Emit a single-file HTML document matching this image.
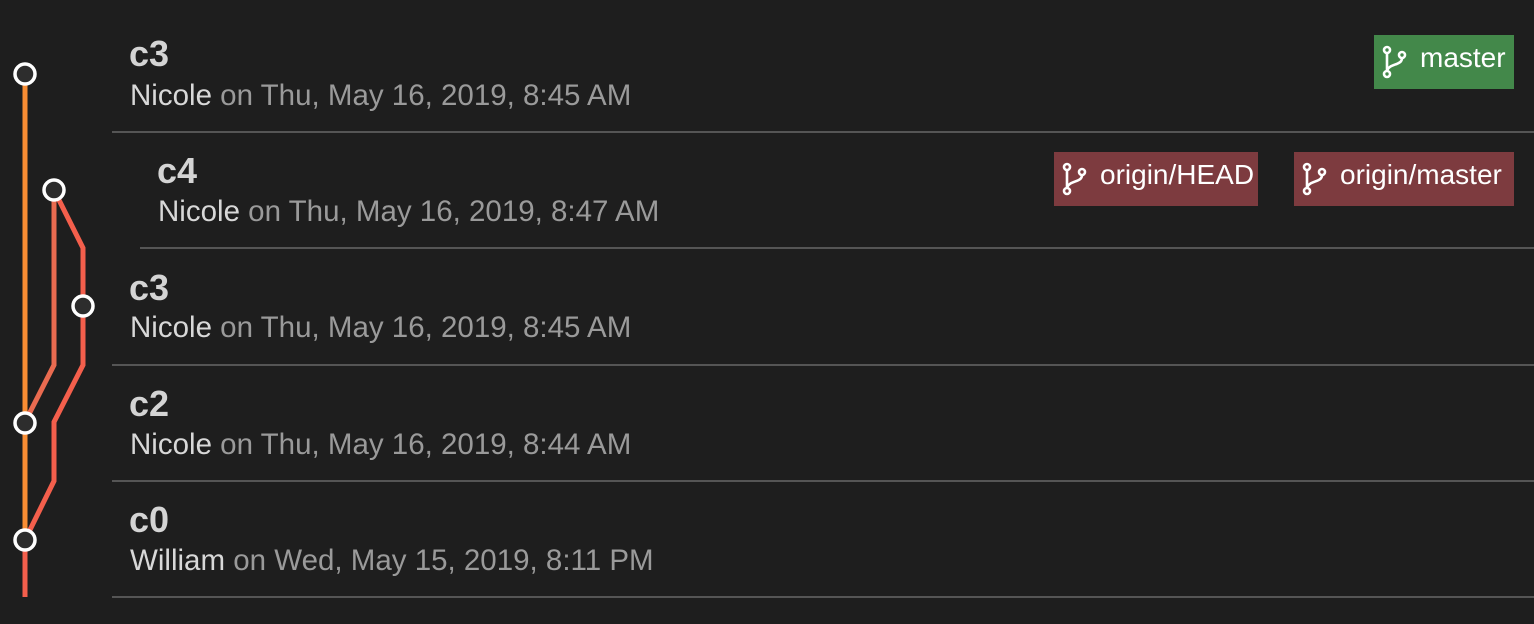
<!DOCTYPE html>
<html><head><style>
body{margin:0;width:1534px;height:624px;background:#1e1e1e;font-family:"Liberation Sans",sans-serif;position:relative;overflow:hidden}
.t{position:absolute;color:#d4d4d4;font-weight:bold;font-size:36px;line-height:40px}
.a{position:absolute;color:#9a9a9a;font-size:29.5px;line-height:32px;white-space:nowrap}
.a b{font-weight:normal;color:#d8d8d8}
.hr{position:absolute;right:0;height:2px;background:#555}
.bd{position:absolute;color:#fff;font-size:28px;height:54px;line-height:46px;box-sizing:border-box;padding-left:46px}
.bd svg{position:absolute;left:8px;top:10px}
</style></head><body>
<svg width="110" height="624" style="position:absolute;left:0;top:0">
<g fill="none" stroke-width="5">
<path d="M25 74V540" stroke="#f98d33"/>
<path d="M54 190V365L25 422" stroke="#ea6b50"/>
<path d="M54 190L83 248V365L54 422V481L25 540V597" stroke="#f45f4c"/>
</g>
<g fill="#2d2d2d" stroke="#fff" stroke-width="3.5">
<circle cx="25" cy="74" r="10"/><circle cx="54" cy="190" r="10"/><circle cx="83" cy="306" r="10"/><circle cx="25" cy="423" r="10"/><circle cx="25" cy="540" r="10"/>
</g></svg>
<div class="t" style="left:129px;top:34px">c3</div>
<div class="a" style="left:130px;top:80px"><b>Nicole</b> on Thu, May 16, 2019, 8:45 AM</div>
<div class="hr" style="left:112px;top:131px"></div>
<div class="t" style="left:157px;top:151px">c4</div>
<div class="a" style="left:158px;top:196px"><b>Nicole</b> on Thu, May 16, 2019, 8:47 AM</div>
<div class="hr" style="left:140px;top:247px"></div>
<div class="t" style="left:129px;top:268px">c3</div>
<div class="a" style="left:130px;top:312px"><b>Nicole</b> on Thu, May 16, 2019, 8:45 AM</div>
<div class="hr" style="left:112px;top:364px"></div>
<div class="t" style="left:129px;top:384px">c2</div>
<div class="a" style="left:130px;top:429px"><b>Nicole</b> on Thu, May 16, 2019, 8:44 AM</div>
<div class="hr" style="left:112px;top:480px"></div>
<div class="t" style="left:129px;top:500px">c0</div>
<div class="a" style="left:130px;top:545px"><b>William</b> on Wed, May 15, 2019, 8:11 PM</div>
<div class="hr" style="left:112px;top:596px"></div>

<div class="bd" style="left:1374px;top:35px;width:140px;background:#43884a">
<svg width="26" height="34" viewBox="0 0 26 34" fill="none" stroke="#fff" stroke-width="2.6"><circle cx="5" cy="5" r="3"/><circle cx="20" cy="10" r="3"/><circle cx="5" cy="29" r="3"/><path d="M5 8V26M20 13C20 21 7 18 5 26"/></svg>master</div>
<div class="bd" style="left:1054px;top:152px;width:204px;background:#7d3b3f">
<svg width="26" height="34" viewBox="0 0 26 34" fill="none" stroke="#fff" stroke-width="2.6"><circle cx="5" cy="5" r="3"/><circle cx="20" cy="10" r="3"/><circle cx="5" cy="29" r="3"/><path d="M5 8V26M20 13C20 21 7 18 5 26"/></svg>origin/HEAD</div>
<div class="bd" style="left:1294px;top:152px;width:220px;background:#7d3b3f">
<svg width="26" height="34" viewBox="0 0 26 34" fill="none" stroke="#fff" stroke-width="2.6"><circle cx="5" cy="5" r="3"/><circle cx="20" cy="10" r="3"/><circle cx="5" cy="29" r="3"/><path d="M5 8V26M20 13C20 21 7 18 5 26"/></svg>origin/master</div>
</body></html>
